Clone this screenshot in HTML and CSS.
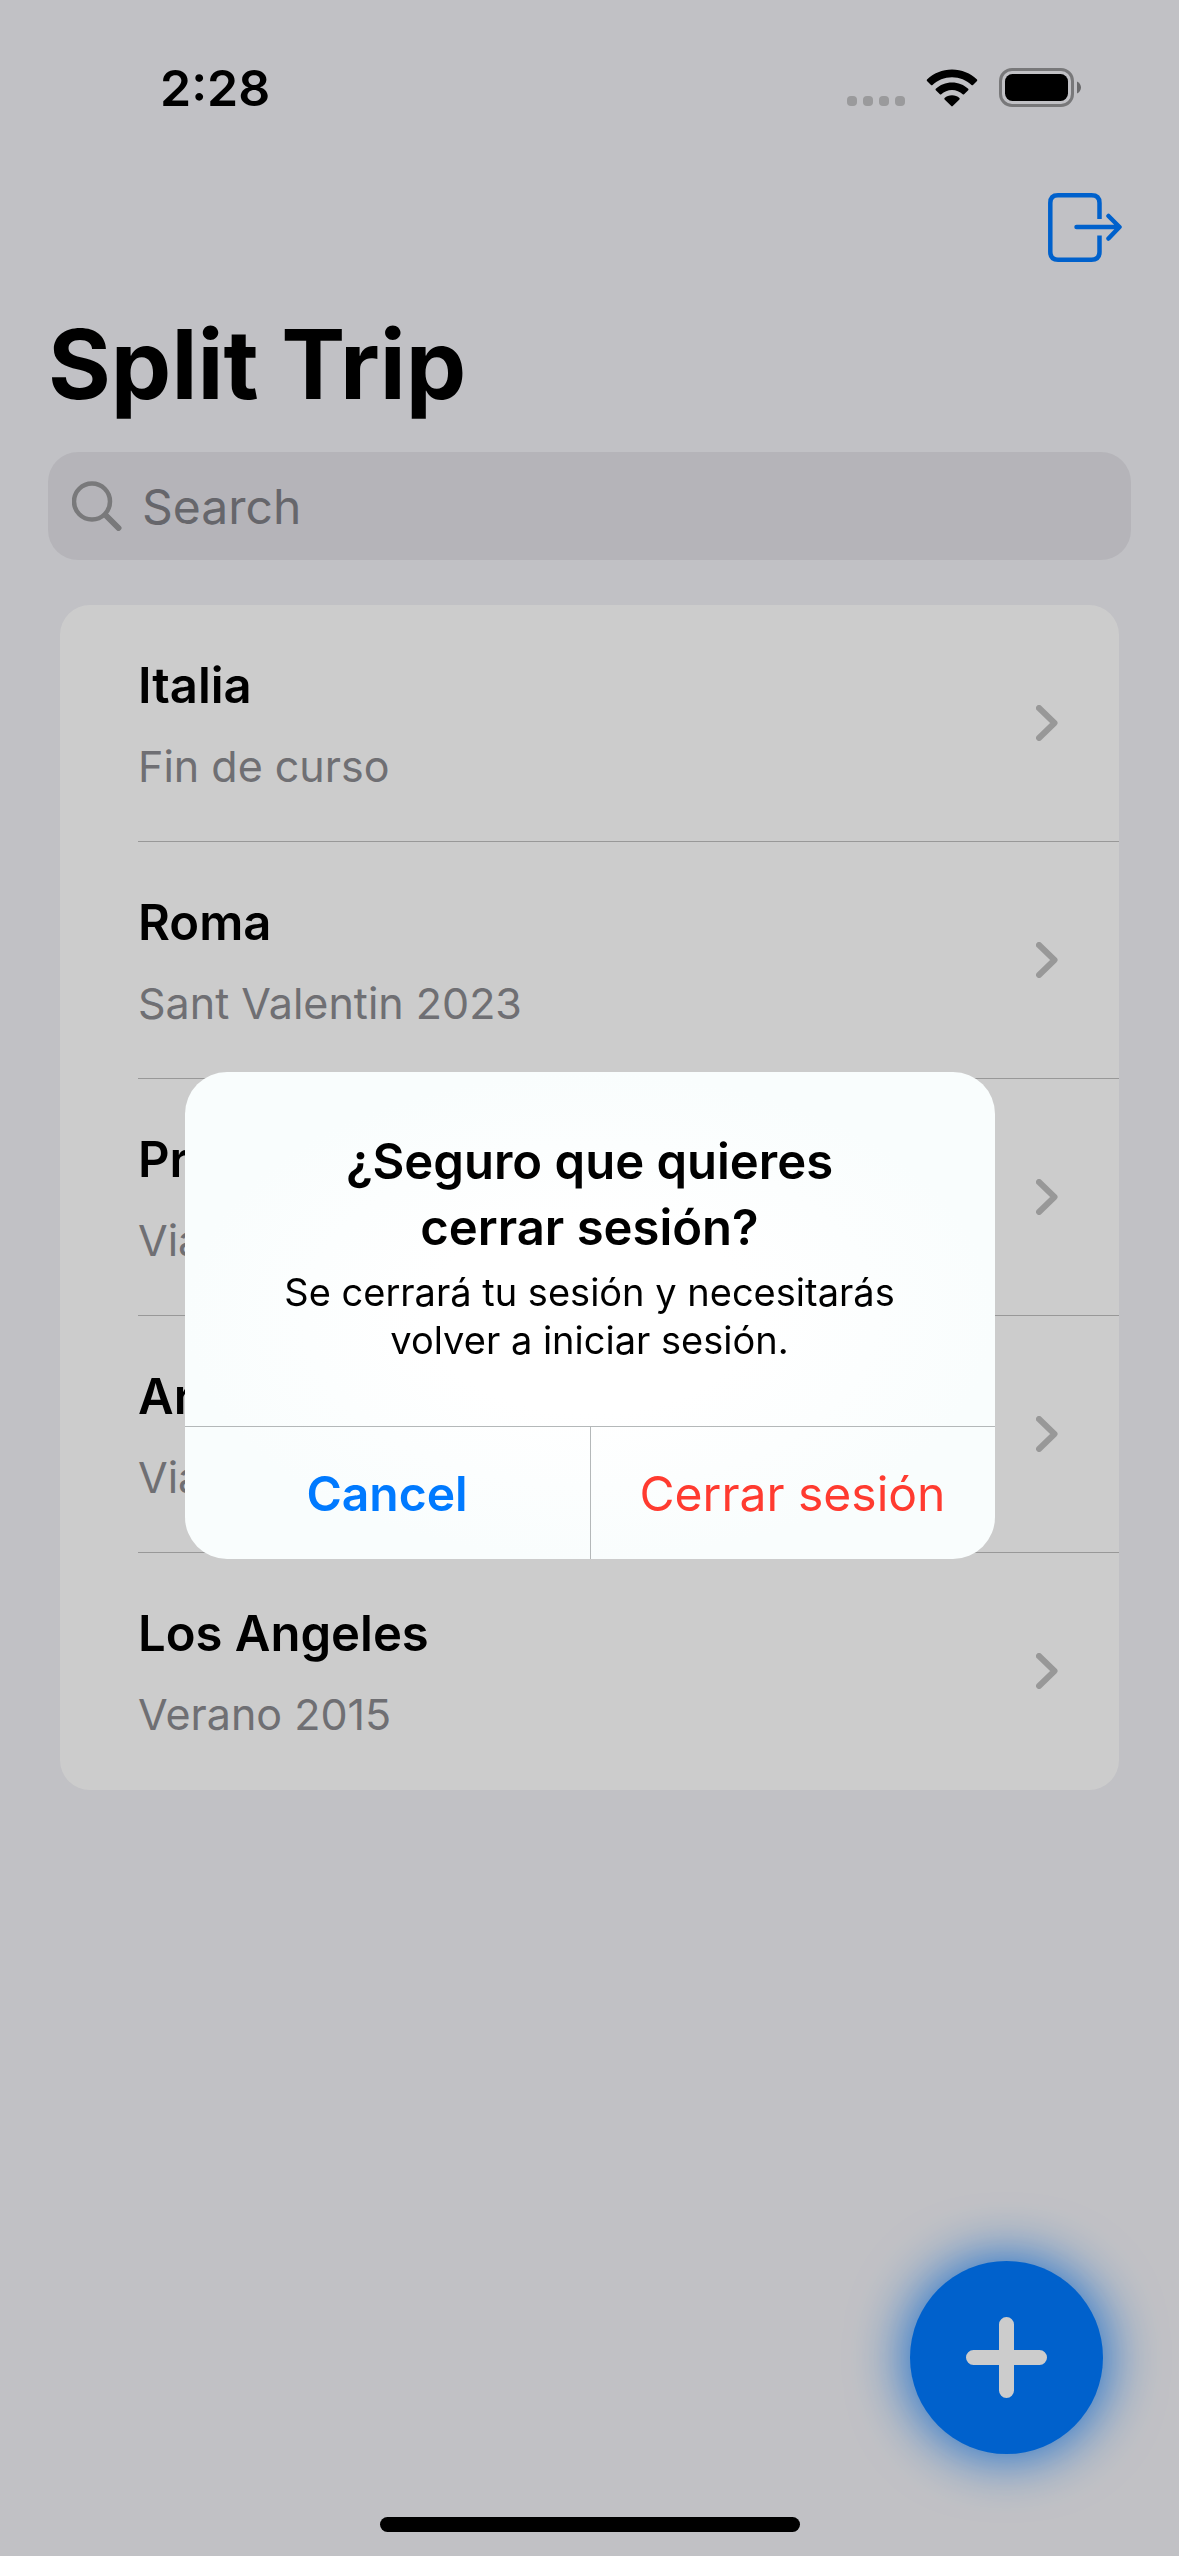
FILE: index.html
```html
<!DOCTYPE html>
<html lang="es">
<head>
  <meta charset="utf-8">
  <meta name="viewport" content="width=device-width, initial-scale=1">
  <title>Split Trip</title>
  <link rel="stylesheet" href="styles.css">
</head>
<body>
  <div class="screen">
    <div class="status-bar">
      <time class="clock">2:28</time>
      <div class="status-icons">
        <svg class="signal" width="58" height="11" viewBox="0 0 58 11" aria-hidden="true">
          <rect x="0" width="10" height="10" rx="4"/><rect x="16" width="10" height="10" rx="4"/><rect x="32" width="10" height="10" rx="4"/><rect x="48" width="10" height="10" rx="4"/>
        </svg>
        <svg class="wifi" width="52" height="38" viewBox="0 0 52 38" aria-hidden="true">
          <path d="M26 0.5C35.700 0.500 44.500 4.300 51 10.500Q51.600 11.300 51 12L47 16Q46.300 16.600 45.500 16C40.400 11.200 33.600 8.200 26 8.200S11.600 11.200 6.500 16Q5.700 16.600 5 16L1 12Q0.400 11.300 1 10.500C7.500 4.300 16.300 0.500 26 0.500Z"/>
          <path d="M26 13.400C32.300 13.400 38 15.800 42.200 19.800Q42.900 20.500 42.200 21.200L38.100 25.300Q37.400 25.900 36.700 25.300C33.900 22.700 30.100 21.100 26 21.100S18.100 22.700 15.300 25.300Q14.600 25.900 13.900 25.300L9.800 21.200Q9.100 20.500 9.800 19.800C14 15.800 19.700 13.400 26 13.400Z"/>
          <path d="M26 26.200C28.900 26.200 31.500 27.200 33.400 29Q34.100 29.700 33.400 30.400L26.700 37.100Q26 37.700 25.300 37.100L18.600 30.400Q17.900 29.700 18.600 29C20.500 27.200 23.100 26.200 26 26.200Z"/>
        </svg>
        <svg class="battery" width="82" height="39" viewBox="0 0 82 39" aria-hidden="true">
          <rect class="battery-case" x="1.500" y="1.500" width="72" height="36" rx="11.500"/>
          <rect x="6" y="6" width="63" height="27" rx="7.500"/>
          <path class="battery-cap" d="M78 13.500C80.500 14.500 82 17 82 19.500S80.500 24.500 78 25.500Z"/>
        </svg>
      </div>
    </div>

    <nav class="toolbar">
      <button class="logout" type="button" aria-label="Cerrar sesión">
        <svg width="74" height="69" viewBox="0 0 74 69" aria-hidden="true">
          <path d="M51.500 26V10Q51.500 2.300 43.500 2.300H10Q2.300 2.300 2.300 10V59Q2.300 66.700 10 66.700H43.500Q51.500 66.700 51.500 59V42.500"/>
          <path class="arrow" d="M28.500 34H71M60.500 23L71.500 34L60.500 45.500"/>
        </svg>
      </button>
    </nav>

    <main class="content">
      <h1 class="title">Split Trip</h1>
      <label class="search">
        <svg width="50" height="50" viewBox="0 0 50 50" aria-hidden="true">
          <circle cx="20" cy="20.500" r="18"/><path class="handle" d="M33.500 34L46.500 47"/>
        </svg>
        <input type="search" placeholder="Search" aria-label="Search">
      </label>

      <ul class="trips">
        <li><a class="trip" href="#"><span class="trip-text"><span class="trip-name">Italia</span><span class="trip-note">Fin de curso</span></span><svg class="chevron" width="22" height="36" viewBox="0 0 22 36" aria-hidden="true"><path d="M3 3L18.500 18L3 33"/></svg></a></li>
        <li><a class="trip" href="#"><span class="trip-text"><span class="trip-name">Roma</span><span class="trip-note">Sant Valentin 2023</span></span><svg class="chevron" width="22" height="36" viewBox="0 0 22 36" aria-hidden="true"><path d="M3 3L18.500 18L3 33"/></svg></a></li>
        <li><a class="trip" href="#"><span class="trip-text"><span class="trip-name">Praga</span><span class="trip-note">Viaje</span></span><svg class="chevron" width="22" height="36" viewBox="0 0 22 36" aria-hidden="true"><path d="M3 3L18.500 18L3 33"/></svg></a></li>
        <li><a class="trip" href="#"><span class="trip-text"><span class="trip-name">Argentina</span><span class="trip-note">Viaje</span></span><svg class="chevron" width="22" height="36" viewBox="0 0 22 36" aria-hidden="true"><path d="M3 3L18.500 18L3 33"/></svg></a></li>
        <li><a class="trip" href="#"><span class="trip-text"><span class="trip-name">Los Angeles</span><span class="trip-note">Verano 2015</span></span><svg class="chevron" width="22" height="36" viewBox="0 0 22 36" aria-hidden="true"><path d="M3 3L18.500 18L3 33"/></svg></a></li>
      </ul>
    </main>

    <div class="home-indicator"></div>
  </div>

  <button class="add" type="button" aria-label="Añadir viaje">
    <svg width="81" height="81" viewBox="0 0 81 81" aria-hidden="true"><path d="M40.500 7.500V73.500M7.500 40.500H73.500"/></svg>
  </button>

  <div class="backdrop">
    <section class="alert" role="alertdialog" aria-modal="true" aria-labelledby="alert-title" aria-describedby="alert-message">
      <div class="alert-body">
        <h2 class="alert-title" id="alert-title">¿Seguro que quieres cerrar sesión?</h2>
        <p class="alert-message" id="alert-message">Se cerrará tu sesión y necesitarás volver a iniciar sesión.</p>
      </div>
      <div class="alert-actions">
        <button class="alert-button cancel" type="button">Cancel</button>
        <button class="alert-button destructive" type="button">Cerrar sesión</button>
      </div>
    </section>
  </div>
</body>
</html>
```
FILE: styles.css
```css
* {
  box-sizing: border-box;
}

body {
  margin: 0;
  background: #f2f2f7;
  color: #000;
  font-family: Inter, "Liberation Sans", sans-serif;
  font-size: 48px;
}

button {
  margin: 0;
  padding: 0;
  border: 0;
  background: none;
  color: inherit;
  font: inherit;
}

svg {
  display: block;
  flex: none;
}

.screen {
  display: flex;
  flex-direction: column;
  min-height: 100vh;
}

/* Status bar */
.status-bar {
  display: flex;
  justify-content: space-between;
  align-items: center;
  height: 177px;
  padding: 0 98px 2px 160px;
}

.clock {
  font-size: 50px;
  font-weight: 600;
  line-height: 60px;
}

.status-icons {
  display: flex;
  align-items: flex-end;
  gap: 21px;
}

.signal {
  fill: #c1c1c3;
}

.battery-case {
  fill: none;
  stroke: #979799;
  stroke-width: 3;
}

.battery-cap {
  fill: #858587;
}

/* Navigation */
.toolbar {
  display: flex;
  justify-content: flex-end;
  padding: 16px 57px 0 48px;
}

.logout svg {
  fill: none;
  stroke: #007aff;
  stroke-width: 4.5;
}

.arrow {
  stroke-linecap: round;
  stroke-linejoin: round;
}

.content {
  padding: 0 48px;
}

.title {
  margin: 42px 0 28px;
  font-size: 96px;
  font-weight: 700;
  line-height: 120px;
}

.search {
  display: flex;
  align-items: center;
  gap: 20px;
  height: 108px;
  padding: 0 24px;
  border-radius: 30px;
  background: #e3e2e8;
}

.search svg {
  fill: none;
  stroke: #98989a;
  stroke-width: 4.5;
  stroke-linecap: round;
}

.search .handle {
  stroke-width: 6;
}

.search input {
  flex: 1;
  min-width: 0;
  padding: 0;
  border: 0;
  outline: 0;
  background: none;
  font: inherit;
}

.search input::placeholder {
  color: #808086;
  opacity: 1;
}

/* Trip list */
.trips {
  margin: 45px 12px 0;
  padding: 0;
  overflow: hidden;
  border-radius: 30px;
  background: #fff;
  list-style: none;
}

.trip {
  display: flex;
  justify-content: space-between;
  align-items: center;
  height: 237px;
  margin-left: 78px;
  padding-right: 61px;
  border-bottom: 1px solid #bebebe;
  color: inherit;
  text-decoration: none;
}

.trips li:last-child .trip {
  border-bottom-color: transparent;
}

.trip-text {
  display: flex;
  flex-direction: column;
  gap: 20px;
  padding-top: 5px;
}

.trip-name {
  font-size: 49px;
  font-weight: 600;
  line-height: 60px;
}

.trip-note {
  color: #8b8b90;
  font-size: 43px;
  line-height: 60px;
}

.chevron {
  fill: none;
  stroke: #bfbfbf;
  stroke-width: 6;
  stroke-linecap: round;
  stroke-linejoin: round;
}

/* Floating controls */
.add {
  position: fixed;
  right: 76px;
  bottom: 102px;
  display: grid;
  place-items: center;
  width: 193px;
  height: 193px;
  border-radius: 50%;
  background: #007aff;
  box-shadow: 0 0 60px #007aff;
}

.add path {
  stroke: #fff;
  stroke-width: 15;
  stroke-linecap: round;
}

.home-indicator {
  width: 420px;
  height: 15px;
  margin: auto auto 24px;
  border-radius: 8px;
  background: #000;
}

/* Alert */
.backdrop {
  position: fixed;
  inset: 0;
  display: flex;
  justify-content: center;
  align-items: center;
  padding: 177px 48px 102px;
  background: rgba(0, 0, 0, 0.2);
}

.alert {
  width: 810px;
  overflow: hidden;
  border-radius: 42px;
  background: radial-gradient(closest-side, #fff 40%, #f9fdfd);
}

.alert-body {
  padding: 57px 48px 62px;
  text-align: center;
}

.alert-title {
  margin: 0 auto;
  max-width: 600px;
  font-size: 49px;
  font-weight: 600;
  line-height: 66px;
}

.alert-message {
  margin: 7px auto 0;
  max-width: 660px;
  font-size: 38px;
  line-height: 48px;
}

.alert-actions {
  display: grid;
  grid-template-columns: 1fr 1fr;
  border-top: 1px solid #b4b8b9;
}

.alert-button {
  height: 132px;
}

.alert-button + .alert-button {
  border-left: 1px solid #b4b8b9;
}

.cancel {
  color: #007aff;
  font-weight: 600;
}

.destructive {
  color: #ff3b30;
}
```
